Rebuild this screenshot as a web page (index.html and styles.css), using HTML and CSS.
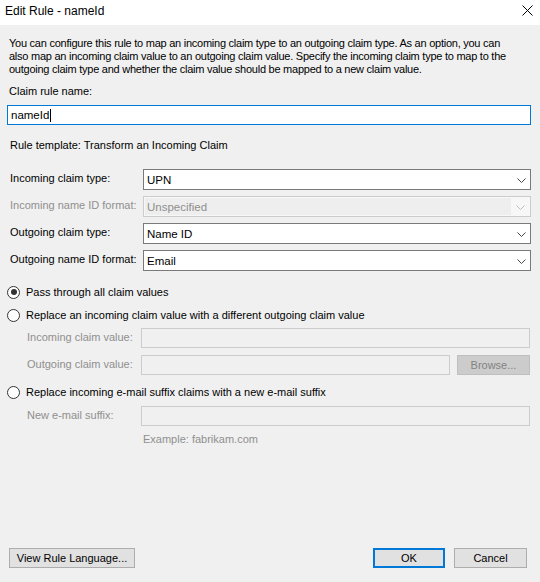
FILE: index.html
```html
<!DOCTYPE html>
<html>
<head>
<meta charset="utf-8">
<link rel="stylesheet" href="styles.css">
</head>
<body>
<div class="window">
  <div class="titlebar">
    <span class="title">Edit Rule - nameId</span>
    <svg class="close" width="11" height="11" viewBox="0 0 11 11"><path d="M0.5 0.5 L10.5 10.5 M10.5 0.5 L0.5 10.5" stroke="#000" stroke-width="1" fill="none"/></svg>
  </div>
  <div class="content">
    <div class="desc">
      <div>You can configure this rule to map an incoming claim type to an outgoing claim type. As an option, you can</div>
      <div>also map an incoming claim value to an outgoing claim value. Specify the incoming claim type to map to the</div>
      <div>outgoing claim type and whether the claim value should be mapped to a new claim value.</div>
    </div>
    <div class="label-name">Claim rule name:</div>
    <div class="name-input">nameId<span class="caret"></span></div>
    <div class="template">Rule template: Transform an Incoming Claim</div>

    <div class="combos">
      <div class="combo-row">
        <span class="combo-label">Incoming claim type:</span>
        <div class="combo"><span class="combo-text">UPN</span><span class="chev"><svg width="9" height="5" viewBox="0 0 9 5"><path d="M0.5 0.5 L4.5 4.5 L8.5 0.5" stroke="#444" fill="none"/></svg></span></div>
      </div>
      <div class="combo-row">
        <span class="combo-label disabled">Incoming name ID format:</span>
        <div class="combo combo-disabled"><span class="combo-text">Unspecified</span><span class="chev"><svg width="9" height="5" viewBox="0 0 9 5"><path d="M0.5 0.5 L4.5 4.5 L8.5 0.5" stroke="#bdbdbd" fill="none"/></svg></span></div>
      </div>
      <div class="combo-row">
        <span class="combo-label">Outgoing claim type:</span>
        <div class="combo"><span class="combo-text">Name ID</span><span class="chev"><svg width="9" height="5" viewBox="0 0 9 5"><path d="M0.5 0.5 L4.5 4.5 L8.5 0.5" stroke="#444" fill="none"/></svg></span></div>
      </div>
      <div class="combo-row">
        <span class="combo-label">Outgoing name ID format:</span>
        <div class="combo"><span class="combo-text">Email</span><span class="chev"><svg width="9" height="5" viewBox="0 0 9 5"><path d="M0.5 0.5 L4.5 4.5 L8.5 0.5" stroke="#444" fill="none"/></svg></span></div>
      </div>
    </div>

    <div class="radio-row r1">
      <span class="radio checked"></span>
      <span>Pass through all claim values</span>
    </div>
    <div class="radio-row r2">
      <span class="radio"></span>
      <span>Replace an incoming claim value with a different outgoing claim value</span>
    </div>
    <div class="sub-row s1">
      <span class="sub-label">Incoming claim value:</span>
      <div class="dis-input grow"></div>
    </div>
    <div class="sub-row s2">
      <span class="sub-label">Outgoing claim value:</span>
      <div class="dis-input grow"></div>
      <div class="browse">Browse...</div>
    </div>
    <div class="radio-row r3">
      <span class="radio"></span>
      <span>Replace incoming e-mail suffix claims with a new e-mail suffix</span>
    </div>
    <div class="sub-row s3">
      <span class="sub-label">New e-mail suffix:</span>
      <div class="dis-input grow"></div>
    </div>
    <div class="example">Example: fabrikam.com</div>

    <div class="footer">
      <div class="btn btn-view">View Rule Language...</div>
      <div class="spacer"></div>
      <div class="btn btn-ok">OK</div>
      <div class="btn btn-cancel">Cancel</div>
    </div>
  </div>
</div>
</body>
</html>
```
FILE: styles.css
```css
html, body {
  margin: 0;
  padding: 0;
}
body {
  width: 540px;
  height: 582px;
  overflow: hidden;
  font-family: "Liberation Sans", Arial, sans-serif;
  font-size: 11px;
  color: #000;
  background: #f0f0f0;
}
.window {
  width: 540px;
  height: 582px;
  display: flex;
  flex-direction: column;
}
.titlebar {
  height: 25px;
  background: #fff;
  display: flex;
  align-items: center;
  padding-left: 5px;
  padding-right: 7px;
  box-sizing: border-box;
  flex: none;
}
.title {
  font-size: 12px;
  flex: 1;
  padding-bottom: 3px;
}
.close {
  margin-bottom: 4px;
}
.content {
  flex: 1;
  display: flex;
  flex-direction: column;
  padding: 0 9px 0 8px;
  background: #f0f0f0;
}
.desc {
  margin-top: 12px;
  line-height: 13px;
  padding-left: 1px;
  white-space: nowrap;
  letter-spacing: -0.25px;
}
.label-name {
  margin-top: 9px;
  line-height: 13px;
  padding-left: 1px;
}
.name-input {
  margin-top: 7px;
  height: 20px;
  box-sizing: border-box;
  border: 1px solid #0078d7;
  background: #fff;
  width: 524px;
  margin-left: -1px;
  padding-left: 3px;
  display: flex;
  align-items: center;
  font-size: 11.5px;
}
.caret {
  display: inline-block;
  width: 1px;
  height: 13px;
  background: #000;
  margin-left: 1px;
}
.template {
  margin-top: 14px;
  line-height: 13px;
  padding-left: 2px;
}
.combos {
  margin-top: 17px;
  display: flex;
  flex-direction: column;
  gap: 6px;
}
.combo-row {
  display: flex;
  align-items: center;
  height: 21px;
}
.combo-label {
  width: 133px;
  padding-left: 2px;
  flex: none;
  padding-bottom: 4px;
}
.disabled {
  color: #8f8f8f;
}
.combo {
  width: 390px;
  height: 21px;
  box-sizing: border-box;
  border: 1px solid #7a7a7a;
  background: #fff;
  display: flex;
  align-items: center;
  justify-content: space-between;
  font-size: 11.5px;
}
.combo-text {
  padding-left: 3px;
}
.chev {
  display: flex;
  width: 18px;
  justify-content: center;
  align-items: center;
  padding-top: 1px;
}
.combo-disabled {
  border-color: #cccccc;
  background: #f7f7f7;
  padding: 1px;
  color: #8f8f8f;
}
.combo-disabled .combo-text {
  flex: 1;
  background: #eeeeee;
  height: 17px;
  display: flex;
  align-items: center;
  padding-left: 2px;
}
.radio-row {
  display: flex;
  align-items: center;
  height: 16px;
}
.r1 { margin-top: 13px; }
.r2 { margin-top: 7px; }
.r3 { margin-top: 9px; }
.radio {
  width: 13px;
  height: 13px;
  box-sizing: border-box;
  border: 1px solid #333;
  border-radius: 50%;
  background: #fff;
  margin-left: -1px;
  margin-right: 6px;
  position: relative;
  flex: none;
}
.radio.checked::after {
  content: "";
  position: absolute;
  left: 2.5px;
  top: 2.5px;
  width: 6px;
  height: 6px;
  border-radius: 50%;
  background: #333;
}
.sub-row {
  display: flex;
  align-items: center;
  height: 20px;
  padding-right: 1px;
}
.s1 { margin-top: 5px; }
.s2 { margin-top: 7px; }
.s3 { margin-top: 6px; }
.sub-label {
  width: 114px;
  padding-left: 19px;
  color: #8f8f8f;
  flex: none;
  padding-bottom: 2px;
}
.dis-input {
  height: 20px;
  box-sizing: border-box;
  border: 1px solid #cccccc;
  background: #f0f0f0;
}
.grow { flex: 1; }
.browse {
  width: 73px;
  height: 20px;
  box-sizing: border-box;
  margin-left: 7px;
  background: #cccccc;
  border: 1px solid #bfbfbf;
  color: #838383;
  display: flex;
  align-items: center;
  justify-content: center;
  padding-bottom: 1px;
}
.example {
  margin-top: 7px;
  padding-left: 135px;
  line-height: 13px;
  color: #8f8f8f;
}
.footer {
  margin-top: auto;
  margin-bottom: 14px;
  display: flex;
  align-items: center;
  height: 20px;
}
.spacer { flex: 1; }
.btn {
  height: 20px;
  box-sizing: border-box;
  background: #e1e1e1;
  border: 1px solid #adadad;
  display: flex;
  align-items: center;
  justify-content: center;
  padding-bottom: 1px;
}
.btn-view {
  width: 126px;
  margin-left: 1px;
}
.btn-ok {
  width: 72px;
  border: 2px solid #0078d7;
}
.btn-cancel {
  width: 73px;
  margin-left: 9px;
  margin-right: 4px;
}
```
